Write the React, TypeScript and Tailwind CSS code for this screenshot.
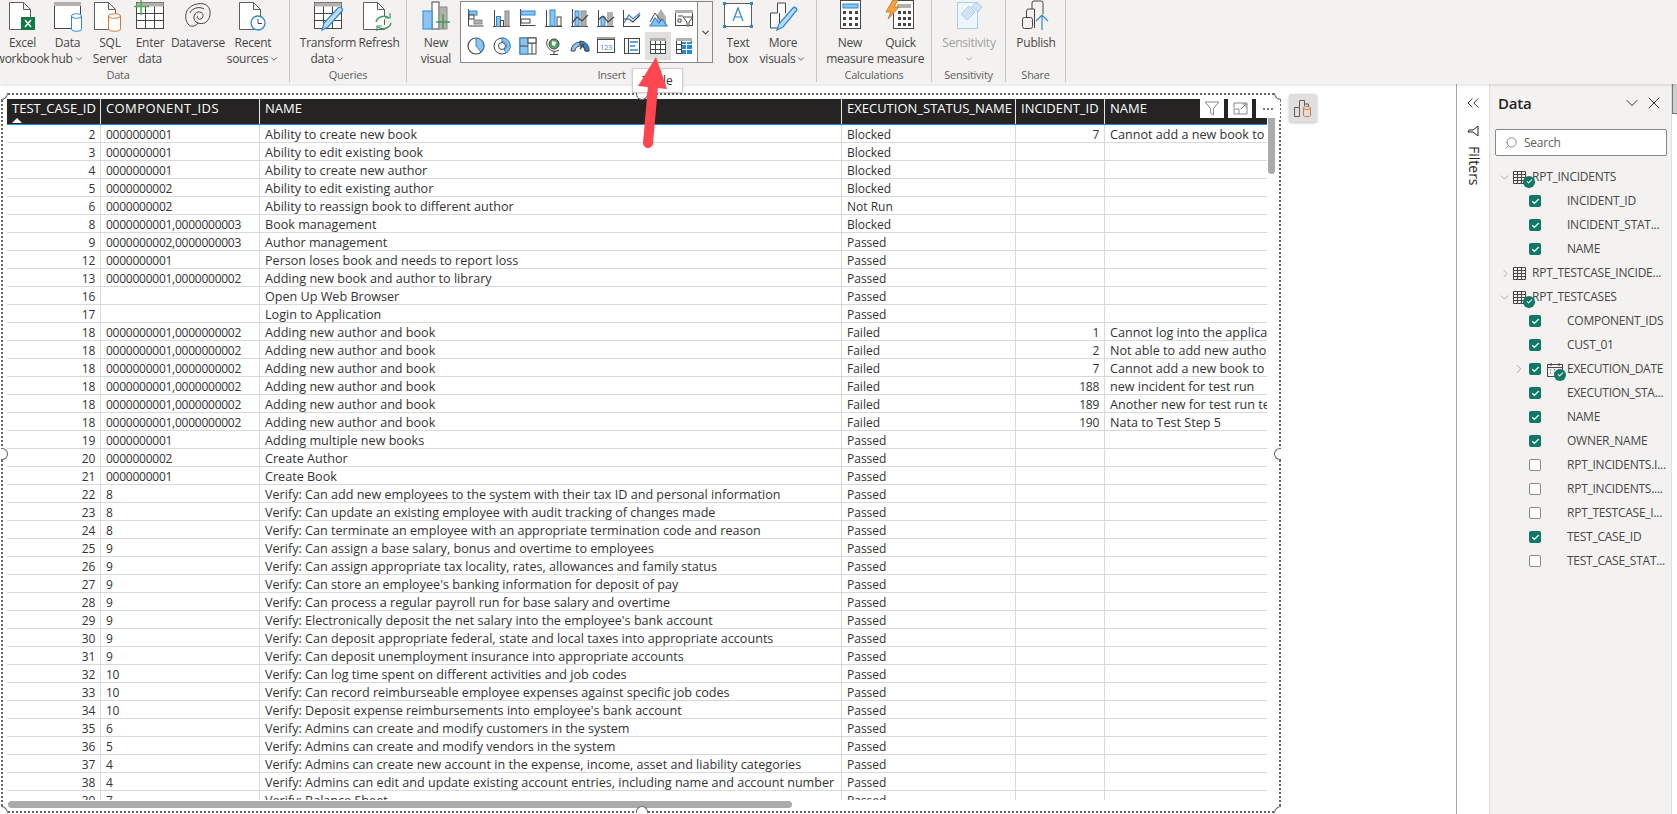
import React from 'react';
import { ChevronDown, ChevronRight, ChevronsLeft, Search, X, Check } from 'lucide-react';

const DK = '#484644';
const BL = '#2b88d8';
const LB = '#8cc3ef';
const GR = '#b3b0ad';

type Row = [string, string, string, string, string?, string?];

const p = 'Passed';
const NAV = '0000000001,0000000002';

// 18 has six incident rows, the rest are one row each
const ROWS: Row[] = [
  ['2', '0000000001', 'Ability to create new book', 'Blocked', '7', 'Cannot add a new book to library'],
  ['3', '0000000001', 'Ability to edit existing book', 'Blocked'],
  ['4', '0000000001', 'Ability to create new author', 'Blocked'],
  ['5', '0000000002', 'Ability to edit existing author', 'Blocked'],
  ['6', '0000000002', 'Ability to reassign book to different author', 'Not Run'],
  ['8', '0000000001,0000000003', 'Book management', 'Blocked'],
  ['9', '0000000002,0000000003', 'Author management', p],
  ['12', '0000000001', 'Person loses book and needs to report loss', p],
  ['13', NAV, 'Adding new book and author to library', p],
  ['16', '', 'Open Up Web Browser', p],
  ['17', '', 'Login to Application', p],
  ['18', NAV, 'Adding new author and book', 'Failed', '1', 'Cannot log into the application'],
  ['18', NAV, 'Adding new author and book', 'Failed', '2', 'Not able to add new author'],
  ['18', NAV, 'Adding new author and book', 'Failed', '7', 'Cannot add a new book to library'],
  ['18', NAV, 'Adding new author and book', 'Failed', '188', 'new incident for test run'],
  ['18', NAV, 'Adding new author and book', 'Failed', '189', 'Another new for test run test'],
  ['18', NAV, 'Adding new author and book', 'Failed', '190', 'Nata to Test Step 5'],
  ['19', '0000000001', 'Adding multiple new books', p],
  ['20', '0000000002', 'Create Author', p],
  ['21', '0000000001', 'Create Book', p],
  ['22', '8', 'Verify: Can add new employees to the system with their tax ID and personal information', p],
  ['23', '8', 'Verify: Can update an existing employee with audit tracking of changes made', p],
  ['24', '8', 'Verify: Can terminate an employee with an appropriate termination code and reason', p],
  ['25', '9', 'Verify: Can assign a base salary, bonus and overtime to employees', p],
  ['26', '9', 'Verify: Can assign appropriate tax locality, rates, allowances and family status', p],
  ['27', '9', "Verify: Can store an employee's banking information for deposit of pay", p],
  ['28', '9', 'Verify: Can process a regular payroll run for base salary and overtime', p],
  ['29', '9', "Verify: Electronically deposit the net salary into the employee's bank account", p],
  ['30', '9', 'Verify: Can deposit appropriate federal, state and local taxes into appropriate accounts', p],
  ['31', '9', 'Verify: Can deposit unemployment insurance into appropriate accounts', p],
  ['32', '10', 'Verify: Can log time spent on different activities and job codes', p],
  ['33', '10', 'Verify: Can record reimburseable employee expenses against specific job codes', p],
  ['34', '10', "Verify: Deposit expense reimbursements into employee's bank account", p],
  ['35', '6', 'Verify: Admins can create and modify customers in the system', p],
  ['36', '5', 'Verify: Admins can create and modify vendors in the system', p],
  ['37', '4', 'Verify: Admins can create new account in the expense, income, asset and liability categories', p],
  ['38', '4', 'Verify: Admins can edit and update existing account entries, including name and account number', p],
  ['39', '7', 'Verify: Balance Sheet', p],
];

const Ico: React.FC<{ s?: number; children: React.ReactNode }> = ({ s = 32, children }) => (
  <svg width={s} height={s} viewBox={`0 0 ${s} ${s}`} fill="none" stroke={DK} strokeWidth="1">
    {children}
  </svg>
);

const Page = ({ x = 2 }: { x?: number }) => (
  <path d={`M${x + 0.5} 2.5h14l7 7v20h-21z M${x + 14.5} 2.5v7h7`} fill="#fff" stroke="#605e5c" />
);

const Grid = () => (
  <>
    <rect x="2.5" y="2.5" width="27" height="26" fill="#fff" />
    <rect x="2.5" y="2.5" width="27" height="4" fill={GR} stroke="none" />
    <path d="M2.5 13.5h27M2.5 20.5h27M11.5 6.5v22M20.5 6.5v22" />
  </>
);

const ICONS: Record<string, React.ReactNode> = {
  excel: (
    <Ico>
      <Page />
      <rect x="14" y="17" width="14" height="13" fill="#107c41" stroke="none" />
      <path d="M18 20l6 7M24 20l-6 7" stroke="#fff" strokeWidth="1.5" />
    </Ico>
  ),
  hub: (
    <Ico>
      <path d="M2.5 2.5h26v26h-26z" fill="#fff" />
      <rect x="2" y="2" width="27" height="4" fill={GR} stroke="none" />
      <path d="M19.5 16c0-3 10-3 10 0v13c0 3-10 3-10 0z" fill="#fff" stroke={BL} />
      <path d="M19.5 16c0 3 10 3 10 0" stroke={BL} />
    </Ico>
  ),
  sql: (
    <Ico>
      <Page x={0} />
      <path d="M14.5 16c0-3 12-3 12 0v13c0 3-12 3-12 0z" fill="#fff" stroke="#d9782d" />
      <path d="M14.5 16c0 3 12 3 12 0" stroke="#d9782d" />
    </Ico>
  ),
  enter: (
    <Ico>
      <Grid />
      <path d="M7 0v15M0 6.5h15" stroke="#4caf50" strokeWidth="1.5" />
    </Ico>
  ),
  dataverse: (
    <Ico>
      <path d="M6 24C1 17 4 6 15 4c9-2 14 3 13 11-1 7-7 10-12 8-6-2-5-10 0-11 5-1 7 5 3 7-3 1-5-2-3-3" />
      <path d="M6 24c3 4 8 2 10-1M8 13c2-5 9-7 14-4" />
    </Ico>
  ),
  recent: (
    <Ico>
      <Page />
      <circle cx="21" cy="23" r="7" fill="#fff" stroke={BL} strokeWidth="1.3" />
      <path d="M21 19v4.5h4" />
    </Ico>
  ),
  transform: (
    <Ico>
      <Grid />
      <path d="M10 30l2-7 14-15c2-2 6 1 4 3L16 27z" fill="#bcdcf5" stroke={BL} strokeWidth="1.2" />
    </Ico>
  ),
  refresh: (
    <Ico>
      <Page x={0} />
      <path d="M13 22a8 7 0 0 1 13-4M28 23a8 7 0 0 1-13 4" stroke="#3a9c5b" strokeWidth="1.4" fill="#fff" />
      <path d="M27 13v5h-5M14 31v-5h5" stroke="#3a9c5b" strokeWidth="1.2" />
    </Ico>
  ),
  newVisual: (
    <Ico>
      <rect x="12" y="2" width="7" height="27" fill="#fff" />
      <rect x="19" y="7" width="8" height="22" fill={GR} stroke="#8a8886" />
      <rect x="3" y="11" width="9" height="18" fill={LB} stroke={BL} />
      <path d="M23 14v15M16 22h14" stroke="#3a9c5b" strokeWidth="1.4" />
    </Ico>
  ),
  textBox: (
    <Ico>
      <rect x="2.5" y="3.5" width="27" height="23" fill="#fff" stroke="#605e5c" />
      <path d="M1 2h3v3H1zM28 2h3v3h-3zM1 25h3v3H1zM28 25h3v3h-3z" fill={BL} stroke="none" />
      <path d="M11 21l5-13 5 13M12.5 17h7" stroke={BL} strokeWidth="1.2" />
    </Ico>
  ),
  more: (
    <Ico>
      <path d="M3.5 28V13h7V3h8v10" fill="#fff" />
      <path d="M3.5 28h9V13" />
      <path d="M10 30l2-6 14-16c2-2 5 1 3 3L16 27z" fill="#bcdcf5" stroke={BL} strokeWidth="1.2" />
    </Ico>
  ),
  measure: (
    <Ico>
      <rect x="6.5" y="0.5" width="20" height="28" fill="#fff" />
      <rect x="9" y="4" width="15" height="4" fill={LB} stroke={BL} />
      <path d="M9 11h3v3H9zM15 11h3v3h-3zM21 11h3v3h-3zM9 17h3v3H9zM15 17h3v3h-3zM21 17h3v3h-3zM9 23h3v3H9zM15 23h3v3h-3zM21 23h3v3h-3z" fill={DK} stroke="none" />
    </Ico>
  ),
  quick: (
    <Ico>
      <rect x="8.5" y="0.5" width="20" height="28" fill="#fff" />
      <rect x="12" y="4" width="14" height="4" fill={GR} stroke="none" />
      <path d="M13 11h3v3h-3zM18 11h3v3h-3zM23 11h3v3h-3zM13 17h3v3h-3zM18 17h3v3h-3zM23 17h3v3h-3zM13 23h3v3h-3zM18 23h3v3h-3zM23 23h3v3h-3z" fill={DK} stroke="none" />
      <path d="M8 0L1 12h5l-3 7 11-12H9l4-7z" fill="#f2a33a" stroke="#d9782d" />
    </Ico>
  ),
  sensitivity: (
    <Ico>
      <rect x="4.5" y="2.5" width="20" height="26" fill="#eef5fb" stroke="#a6d0ee" />
      <path d="M8 14l8-8 6 6-8 8zM19 7l4-5 6 5-4 5z" fill="#cfe4f5" stroke="#a6d0ee" />
    </Ico>
  ),
  publish: (
    <Ico>
      <rect x="2.5" y="17.5" width="10" height="11" rx="2" />
      <path d="M6.5 17v-6a2 2 0 0 1 2-2h6v19M12 9V3a2 2 0 0 1 2-2h7a2 2 0 0 1 2 2v11" />
      <path d="M22 30V15M16 21l6-6 6 6" stroke={BL} strokeWidth="1.2" />
    </Ico>
  ),
};

// the visuals gallery, two rows of nine
const GALLERY: React.ReactNode[] = [
  <><path d="M2.5 1v17M2.5 18h15" /><rect x="3" y="3" width="8" height="4" fill={LB} stroke={BL} /><rect x="3" y="7" width="5" height="4" fill="#fff" /><rect x="8" y="12" width="8" height="4" fill={GR} stroke="#8a8886" /></>,
  <><path d="M1 18.5h17M2.5 2v16" /><rect x="4.5" y="8.5" width="4" height="10" fill={LB} stroke={BL} /><rect x="8.5" y="12.5" width="3" height="6" fill="#fff" /><rect x="13" y="3" width="4" height="15" fill={GR} stroke="#8a8886" /></>,
  <><path d="M2.5 1v17M2.5 17.5h15" /><rect x="3" y="3" width="14" height="4" fill={LB} stroke={BL} /><rect x="3" y="11" width="9" height="4" fill="#fff" /></>,
  <><path d="M1 18.5h17M2.5 2v16" /><rect x="6" y="2" width="5" height="16" fill={LB} stroke={BL} /><rect x="13" y="9" width="4" height="9" fill="#fff" /></>,
  <><path d="M1 18.5h17M2.5 1v17" /><rect x="5" y="3" width="4" height="15" fill={LB} stroke={BL} /><rect x="11" y="3" width="5" height="15" fill={GR} stroke="#8a8886" /><path d="M2 15l5-6 5 4 6-6" strokeWidth="1.2" /></>,
  <><path d="M1 18.5h17M2.5 2v16" /><rect x="5" y="9" width="4" height="9" fill={LB} stroke={BL} /><rect x="11" y="4" width="6" height="14" fill={GR} stroke="none" /><path d="M2 12l5-4 5 6 6-5" strokeWidth="1.2" /></>,
  <><path d="M1 18.5h17M1.5 2v16" /><path d="M2 15l5-8 4 4 7-6" stroke={BL} strokeWidth="1.2" /><path d="M2 11l5 0 4 3 7-7" strokeWidth="1.2" /></>,
  <><path d="M9 7l4-6 5 8v9h-9z" fill={GR} stroke="none" /><path d="M2 18l5-8 4 5 3-4 5 7z" fill={LB} stroke={BL} strokeWidth="1.2" /><path d="M2 14l5-9 6 8" /></>,
  <><rect x="1.5" y="2.5" width="17" height="15" fill="#fff" /><rect x="1" y="2" width="18" height="3" fill={GR} stroke="none" /><path d="M4 8h5M4 11h3v3H4z" /><path d="M9 9h10l-4 5v4h-2v-4z" fill="#fff" /></>,
  <><circle cx="10" cy="10" r="8" fill="#fff" strokeWidth="1.2" /><path d="M10 2a8 8 0 0 1 5 14l-5-6z" fill={LB} stroke={BL} /></>,
  <><circle cx="10" cy="10" r="8" /><path d="M10 2a8 8 0 0 1 4 15l-2-4a3.500 3.500 0 0 0-2-7z" fill={LB} stroke={BL} /><circle cx="10" cy="10" r="3.500" /></>,
  <><rect x="2" y="2" width="16" height="16" fill="#fff" /><rect x="2" y="2" width="8" height="16" fill={LB} stroke={BL} /><path d="M10 7h8M14 7v11M2 10h8" stroke={DK} /><rect x="10" y="2" width="8" height="5" fill="#fff" /></>,
  <><circle cx="10" cy="8" r="5" fill="#5aa469" stroke="#444" /><path d="M8 5l4 1-1 4-3-1z" fill="#fff" stroke="none" /><path d="M4 3a8 8 0 0 0 11 11M10 15v3M6 18.500h8" /></>,
  <><path d="M1 15a9 9 0 0 1 18 0l-4 0a5 5 0 0 0-10 0z" fill={LB} stroke={DK} /><path d="M10 5a9 9 0 0 1 9 10h-4a5 5 0 0 0-5-6z" fill={BL} stroke={DK} /><path d="M10 13l4-5" strokeWidth="1.4" /></>,
  <><rect x="1.500" y="3.500" width="17" height="13" fill="#fff" /><text x="10" y="13.500" fontSize="7.500" textAnchor="middle" fill={BL} stroke="none" fontFamily="Open Sans, sans-serif">123</text><path d="M1 2h18" /></>,
  <><rect x="2.500" y="2.500" width="15" height="15" fill="#fff" /><path d="M6.500 2v16" /><path d="M8 6h8M8 10h5M8 14h8" stroke={BL} strokeWidth="1.6" /></>,
  <><rect x="2.500" y="2.500" width="15" height="15" fill="#fff" /><rect x="2" y="2" width="16" height="3" fill={GR} stroke="none" /><path d="M2 8.500h16M2 13.500h16M7.500 5v13M12.500 5v13" /></>,
  <><rect x="2.500" y="2.500" width="15" height="15" fill="#fff" /><rect x="2" y="2" width="16" height="3" fill={GR} stroke="none" /><rect x="8" y="6" width="10" height="12" fill={BL} stroke="none" /><path d="M2 8.500h16M2 13.500h16M7.500 5v13M12.500 5v13" stroke="#fff" /><path d="M2 8.500h6M2 13.500h6M7.500 5v13" stroke={DK} /></>,
];

const RibbonButton: React.FC<{
  w: string;
  icon: string;
  lines: string[];
  caret?: boolean;
  muted?: boolean;
}> = ({ w, icon, lines, caret, muted }) => (
  <div className={`${w} flex flex-col items-center shrink-0 ${muted ? 'text-[#a19f9d]' : 'text-[#484644]'}`}>
    <div className="h-[35px] flex items-start justify-center">{ICONS[icon]}</div>
    {lines.map((l, i) => (
      <div key={i} className="h-4 leading-4 whitespace-nowrap flex items-center">
        {l}
        {caret && i === lines.length - 1 && <ChevronDown size={10} className="ml-[1px]" />}
      </div>
    ))}
    {muted && <ChevronDown size={10} className="mt-[3px]" />}
  </div>
);

const RibbonGroup: React.FC<{ w: string; label: string; pad?: string; children: React.ReactNode }> = ({
  w,
  label,
  pad = '',
  children,
}) => (
  <div className={`${w} h-[82px] shrink-0 flex flex-col border-r border-[#c8c6c4]`}>
    <div className={`flex h-[70px] ${pad}`}>{children}</div>
    <div className="text-center text-[11px] leading-[14px] text-[#605e5c]">{label}</div>
  </div>
);

const Ribbon = () => (
  <div className="relative z-20 h-[84px] shrink-0 flex bg-[#f3f2f1] text-[12px] tracking-[-0.25px] shadow-[0_1px_3px_rgba(0,0,0,0.15)] overflow-hidden">
    <div className="w-[290px] h-[82px] shrink-0 flex flex-col border-r border-[#c8c6c4]">
      <div className="flex h-[70px]">
        <RibbonButton w="w-[45px]" icon="excel" lines={['Excel', 'workbook']} />
        <RibbonButton w="w-[45px]" icon="hub" lines={['Data', 'hub']} caret />
        <RibbonButton w="w-[40px]" icon="sql" lines={['SQL', 'Server']} />
        <RibbonButton w="w-[40px]" icon="enter" lines={['Enter', 'data']} />
        <RibbonButton w="w-[56px]" icon="dataverse" lines={['Dataverse']} />
        <RibbonButton w="w-[54px]" icon="recent" lines={['Recent', 'sources']} caret />
      </div>
      <div className="w-[236px] text-center text-[11px] leading-[14px] text-[#605e5c]">Data</div>
    </div>
    <RibbonGroup w="w-[117px]" label="Queries" pad="pl-[7px]">
      <RibbonButton w="w-[62px]" icon="transform" lines={['Transform', 'data']} caret />
      <RibbonButton w="w-[40px]" icon="refresh" lines={['Refresh']} />
    </RibbonGroup>
    <RibbonGroup w="w-[410px]" label="Insert" pad="pl-[5px]">
      <RibbonButton w="w-[48px]" icon="newVisual" lines={['New', 'visual']} />
      <div className="w-[253px] h-[62px] mt-[1px] shrink-0 flex border border-[#8a8886] bg-white">
        <div className="w-[237px] pl-[2px] pt-[2px] grid grid-cols-[repeat(9,26px)] grid-rows-[repeat(2,28px)] border-r border-[#8a8886]">
          {GALLERY.map((g, i) => (
            <div key={i} className={`flex items-center justify-center ${i === 16 ? 'bg-[#e1dfdd]' : ''}`}>
              <Ico s={20}>{g}</Ico>
            </div>
          ))}
        </div>
        <div className="flex-1 bg-[#f3f2f1] flex items-center justify-center">
          <ChevronDown size={11} strokeWidth={2.5} className="text-[#484644]" />
        </div>
      </div>
      <div className="w-[3px]" />
      <RibbonButton w="w-[44px]" icon="textBox" lines={['Text', 'box']} />
      <RibbonButton w="w-[46px]" icon="more" lines={['More', 'visuals']} caret />
    </RibbonGroup>
    <RibbonGroup w="w-[115px]" label="Calculations" pad="pl-[7px]">
      <RibbonButton w="w-[52px]" icon="measure" lines={['New', 'measure']} />
      <RibbonButton w="w-[49px]" icon="quick" lines={['Quick', 'measure']} />
    </RibbonGroup>
    <RibbonGroup w="w-[74px]" label="Sensitivity" pad="pl-[6px]">
      <RibbonButton w="w-[62px]" icon="sensitivity" lines={['Sensitivity']} muted />
    </RibbonGroup>
    <RibbonGroup w="w-[60px]" label="Share" pad="pl-[4px]">
      <RibbonButton w="w-[52px]" icon="publish" lines={['Publish']} />
    </RibbonGroup>
  </div>
);

const COLS = 'grid grid-cols-[94px_159px_582px_174px_89px_162px]';

// resize handles: only the part inside the dotted frame shows
const Handle: React.FC<{ cls: string }> = ({ cls }) => (
  <div className={`absolute bg-white border-[#666] ${cls}`} />
);

const HeadBtn: React.FC<{ children: React.ReactNode }> = ({ children }) => (
  <div className="w-6 h-[19px] bg-white flex items-center justify-center">{children}</div>
);

const TableVisual = () => (
  <div className="relative w-[1280px] h-[720px] border-2 border-dotted border-[#666] pl-1 pt-1">
    <div className="w-[1260px] h-[701px] overflow-hidden text-[#333]">
      <div className={`${COLS} h-[26px] bg-[#252423] text-white text-[13px] border-b border-[#118dff] leading-[19px]`}>
        <div className="relative pl-[5px] border-r border-[#e6e6e6]">
          TEST_CASE_ID
          <div className="absolute left-[5px] top-[19px] w-0 h-0 border-x-[5px] border-x-transparent border-b-[5px] border-b-white" />
        </div>
        <div className="pl-[5px] border-r border-[#e6e6e6] tracking-[0.4px]">COMPONENT_IDS</div>
        <div className="pl-[5px] border-r border-[#e6e6e6]">NAME</div>
        <div className="pl-[5px] border-r border-[#e6e6e6]">EXECUTION_STATUS_NAME</div>
        <div className="pl-[5px] border-r border-[#e6e6e6]">INCIDENT_ID</div>
        <div className="pl-[5px]">NAME</div>
      </div>
      {ROWS.map((r, i) => (
        <div key={i} className={`${COLS} grid-rows-[17px] h-[18px] text-[12px] leading-[19px] border-b border-[#d9d9d9]`}>
          <div className="pr-[5px] text-right border-r border-[#d9d9d9] tracking-[-0.25px]">{r[0]}</div>
          <div className="pl-[5px] border-r border-[#d9d9d9] tracking-[-0.25px]">{r[1]}</div>
          <div className="pl-[5px] border-r border-[#d9d9d9] text-[12.6px] whitespace-nowrap overflow-hidden">{r[2]}</div>
          <div className="pl-[5px] border-r border-[#d9d9d9]">{r[3]}</div>
          <div className="pr-[5px] text-right border-r border-[#d9d9d9] tracking-[-0.25px]">{r[4]}</div>
          <div className="pl-[5px] text-[12.6px] whitespace-nowrap overflow-hidden">{r[5]}</div>
        </div>
      ))}
    </div>
    <div className="mt-[1px] ml-[1px] w-[784px] h-[7px] rounded-full bg-[#ababab]" />

    {/* header hover buttons and the vertical scrollbar sit over the table */}
    <div className="absolute left-[1197px] top-[4px] flex gap-1">
      <HeadBtn>
        <svg width="16" height="15" viewBox="0 0 16 15" fill="none" stroke="#8a8886"><path d="M1 1h14L9.500 7.500V14L6.500 12V7.500z" /></svg>
      </HeadBtn>
      <HeadBtn>
        <svg width="15" height="13" viewBox="0 0 15 13" fill="none" stroke="#8a8886"><path d="M1 6V1h13v11H6M1 7h5v5H1zM8 7l5-5M9.500 2H13v3.500" /></svg>
      </HeadBtn>
      <HeadBtn>
        <div className="flex gap-[2px]">
          <span className="w-[2px] h-[2px] bg-[#777]" />
          <span className="w-[2px] h-[2px] bg-[#777]" />
          <span className="w-[2px] h-[2px] bg-[#777]" />
        </div>
      </HeadBtn>
    </div>
    <div className="absolute left-[1265px] top-[23px] w-[7px] h-[56px] rounded-b-full bg-[#ababab]" />

    <Handle cls="-left-[2px] -top-[2px] w-[7px] h-[7px] rounded-br-full border-r border-b" />
    <Handle cls="left-[633px] -top-[2px] w-[12px] h-[7px] rounded-b-full border-x border-b" />
    <Handle cls="-right-[2px] -top-[2px] w-[7px] h-[7px] rounded-bl-full border-l border-b" />
    <Handle cls="-left-[2px] top-[353px] w-[7px] h-[12px] rounded-r-full border-y border-r" />
    <Handle cls="-right-[2px] top-[353px] w-[7px] h-[12px] rounded-l-full border-y border-l" />
    <Handle cls="-left-[2px] -bottom-[2px] w-[7px] h-[7px] rounded-tr-full border-r border-t" />
    <Handle cls="left-[633px] -bottom-[2px] w-[12px] h-[7px] rounded-t-full border-x border-t" />
    <Handle cls="-right-[2px] -bottom-[2px] w-[7px] h-[7px] rounded-tl-full border-l border-t" />
  </div>
);

const Checkbox: React.FC<{ on?: boolean }> = ({ on }) =>
  on ? (
    <div className="w-3 h-3 rounded-[2px] bg-[#117865] flex items-center justify-center shrink-0">
      <Check size={9} strokeWidth={3} className="text-white" />
    </div>
  ) : (
    <div className="w-3 h-3 rounded-[2px] border border-[#8a8886] bg-white shrink-0" />
  );

const Badge = () => (
  <div className="absolute -right-[3px] -bottom-[4px] w-3 h-3 rounded-full bg-[#117865] flex items-center justify-center">
    <Check size={7} strokeWidth={3.5} className="text-white" />
  </div>
);

const TableIcon = () => (
  <svg width="13" height="13" viewBox="0 0 13 13" fill="none" stroke="#484644">
    <path d="M.5.500h12v12H.500zM.500 3.500h12M.500 6.500h12M.500 9.500h12M4.500.500v12M8.500.500v12" />
  </svg>
);

const TableRow: React.FC<{ name: string; open?: boolean; badge?: boolean }> = ({ name, open, badge }) => (
  <div className="h-6 flex items-center pl-[8px] shrink-0">
    <div className="w-[15px] shrink-0 text-[#8a8886]">
      {open ? <ChevronDown size={13} strokeWidth={1.2} /> : <ChevronRight size={13} strokeWidth={1.2} className="ml-[1px]" />}
    </div>
    <div className="relative w-[19px] shrink-0">
      <TableIcon />
      {badge && <Badge />}
    </div>
    <span className="whitespace-nowrap">{name}</span>
  </div>
);

const FieldRow: React.FC<{ name: string; on?: boolean; date?: boolean }> = ({ name, on, date }) => (
  <div className="h-6 flex items-center pl-[39px] shrink-0">
    <div className="relative">
      {date && <ChevronRight size={14} strokeWidth={1.2} className="absolute -left-[17px] -top-[1px] text-[#8a8886]" />}
      <Checkbox on={on} />
    </div>
    <div className="w-[26px] shrink-0 pl-[6px]">
      {date && (
        <div className="relative w-[16px] h-[15px]">
          <svg width="16" height="15" viewBox="0 0 16 15" fill="none" stroke="#484644">
            <path d="M.500 2.500h15v12H.500zM.500 5.500h15M4 1v3M12 1v3" />
            <path d="M3 8h2M7 8h2M11 8h2M3 11h2M7 11h2M11 11h2" strokeDasharray="1 1" />
          </svg>
          <Badge />
        </div>
      )}
    </div>
    <span className="whitespace-nowrap">{name}</span>
  </div>
);

const FiltersPane = () => (
  <div className="w-[33px] shrink-0 border-l border-[#a8a8a8] bg-white flex flex-col items-center pt-[9px] text-[#252423]">
    <ChevronsLeft size={20} strokeWidth={1.1} />
    <svg width="12" height="12" viewBox="0 0 12 12" fill="none" stroke="#252423" className="mt-[12px] rotate-90">
      <path d="M1 1h10L7 6v5L5 10V6z" />
    </svg>
    <span className="mt-[9px] ml-[1px] text-[14px] font-medium [writing-mode:vertical-rl] leading-4">Filters</span>
  </div>
);

const DataPane = () => (
  <div className="w-[183px] shrink-0 bg-[#f3f2f1] border-l border-[#e1dfdd] border-r pt-[9px] text-[12px] tracking-[-0.25px] text-[#484644]">
    <div className="flex items-center h-5 pl-[8px] pr-[7px] text-[#252423]">
      <span className="text-[15px] font-semibold">Data</span>
      <ChevronDown size={20} strokeWidth={1.1} className="ml-auto" />
      <X size={20} strokeWidth={1.1} className="ml-[2px]" />
    </div>
    <div className="ml-[5px] mt-[16px] w-[172px] h-[27px] bg-white border border-[#8a8886] rounded-[2px] flex items-center pl-[8px] gap-[6px] text-[#605e5c]">
      <Search size={14} strokeWidth={1.2} className="-scale-x-100" />
      <span>Search</span>
    </div>
    <div className="mt-[9px] flex flex-col">
      <TableRow name="RPT_INCIDENTS" open badge />
      <FieldRow name="INCIDENT_ID" on />
      <FieldRow name="INCIDENT_STAT..." on />
      <FieldRow name="NAME" on />
      <TableRow name="RPT_TESTCASE_INCIDE..." />
      <TableRow name="RPT_TESTCASES" open badge />
      <FieldRow name="COMPONENT_IDS" on />
      <FieldRow name="CUST_01" on />
      <FieldRow name="EXECUTION_DATE" on date />
      <FieldRow name="EXECUTION_STA..." on />
      <FieldRow name="NAME" on />
      <FieldRow name="OWNER_NAME" on />
      <FieldRow name="RPT_INCIDENTS.I..." />
      <FieldRow name="RPT_INCIDENTS...." />
      <FieldRow name="RPT_TESTCASE_I..." />
      <FieldRow name="TEST_CASE_ID" on />
      <FieldRow name="TEST_CASE_STAT..." />
    </div>
  </div>
);

const ToggleBtn = () => (
  <div className="w-[28px] h-[28px] mt-[1px] ml-[8px] shrink-0 bg-[#e1dfdd] rounded-[2px] shadow-[0_1px_3px_rgba(0,0,0,0.25)] flex items-center justify-center">
    <svg width="20" height="20" viewBox="0 0 20 20" fill="none" stroke="#605e5c">
      <path d="M1.500 18.500v-9h5v9zM6.500 9V2.500h5V8M11.500 6h4v3" />
      <path d="M10.500 10c0-2 7-2 7 0v7.500c0 1.500-7 1.500-7 0z" stroke="#d9782d" />
      <path d="M10.500 10c0 2 7 2 7 0" stroke="#d9782d" />
    </svg>
  </div>
);

export default function App() {
  return (
    <div className="relative w-full h-screen overflow-hidden flex flex-col bg-white font-['Open_Sans','Noto_Sans',sans-serif]">
      <Ribbon />
      <div className="flex flex-1 min-h-0">
        <div className="flex-1 min-w-0 flex pl-[1px] pt-[9px]">
          <TableVisual />
          <ToggleBtn />
        </div>
        <FiltersPane />
        <DataPane />
        <div className="w-[5px] shrink-0 bg-white">
          <div className="h-[30px] bg-[#d0cfcf] border-l border-b border-[#777]" />
        </div>
      </div>

      {/* tooltip for the hovered gallery item, with the annotation arrow on top */}
      <div className="absolute z-30 left-[632px] top-[68px] w-[51px] h-[25px] bg-white border border-[#d2d0ce] shadow-sm text-[12px] text-[#333] flex items-center justify-center">
        Table
      </div>
      <svg className="absolute z-40 left-[630px] top-[50px]" width="45" height="105" viewBox="0 0 45 105" fill="none">
        <path d="M26 7L37 39 8 36z" fill="#ff4550" />
        <path d="M23 36L18 93" stroke="#ff4550" strokeWidth="10" strokeLinecap="round" />
      </svg>
    </div>
  );
}
